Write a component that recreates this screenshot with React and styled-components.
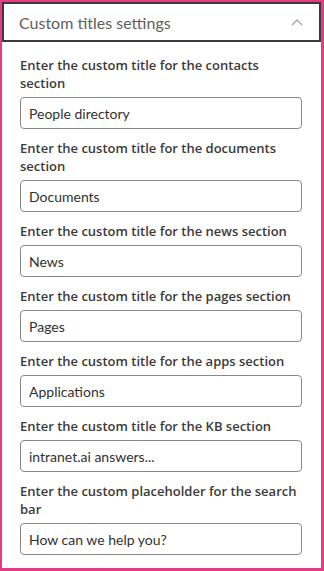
import React from "react";
import styled, { createGlobalStyle } from "styled-components";

const GlobalStyle = createGlobalStyle`
    html, body {
        margin:0;
        padding:0;
        background:#fff;
    }
    * {
        box-sizing:border-box;
    }
`

const Frame = styled.div`
    width:324px;
    height:571px;
    border:3px solid #e63a85;
    border-top-width:2px;
    border-left-width:2px;
    font-family:"Segoe UI", "Open Sans", sans-serif;
    overflow:hidden;
`

const Header = styled.div`
    height:40px;
    border:2px solid #3b3a39;
    display:flex;
    align-items:center;
    justify-content:space-between;
    padding:0 16px 0 15px;
`

const HeaderTitle = styled.span`
    font-family:Lato, "Open Sans", sans-serif;
    font-size:16px;
    color:#605e5c;
`

const Body = styled.div`
    padding:14px 19px 0 18px;
    display:flex;
    flex-direction:column;
    gap:10px;
`

const Field = styled.div`
    display:flex;
    flex-direction:column;
    gap:5px;
`

const Label = styled.label`
    font-size:13px;
    font-weight:600;
    line-height:18px;
    color:#3b3a39;
`

const Input = styled.input`
    width:100%;
    height:32px;
    border:1px solid #8a8886;
    border-radius:4px;
    padding:0 8px;
    font-family:Lato, "Open Sans", sans-serif;
    font-size:14px;
    color:#323130;
    outline:none;
`

const fields = [
    { label: "Enter the custom title for the contacts section", value: "People directory" },
    { label: "Enter the custom title for the documents section", value: "Documents" },
    { label: "Enter the custom title for the news section", value: "News" },
    { label: "Enter the custom title for the pages section", value: "Pages" },
    { label: "Enter the custom title for the apps section", value: "Applications" },
    { label: "Enter the custom title for the KB section", value: "intranet.ai answers..." },
    { label: "Enter the custom placeholder for the search bar", value: "How can we help you?" },
]

export default function App() {
    return (
        <>
            <GlobalStyle />
            <Frame>
                <Header>
                    <HeaderTitle>Custom titles settings</HeaderTitle>
                    <svg width="12" height="8" viewBox="0 0 12 8">
                        <path d="M1 7 L6 2 L11 7" fill="none" stroke="#a19f9d" strokeWidth="1.2" />
                    </svg>
                </Header>
                <Body>
                    {fields.map((item) => (
                        <Field key={item.label}>
                            <Label>{item.label}</Label>
                            <Input defaultValue={item.value} />
                        </Field>
                    ))}
                </Body>
            </Frame>
        </>
    )
}
